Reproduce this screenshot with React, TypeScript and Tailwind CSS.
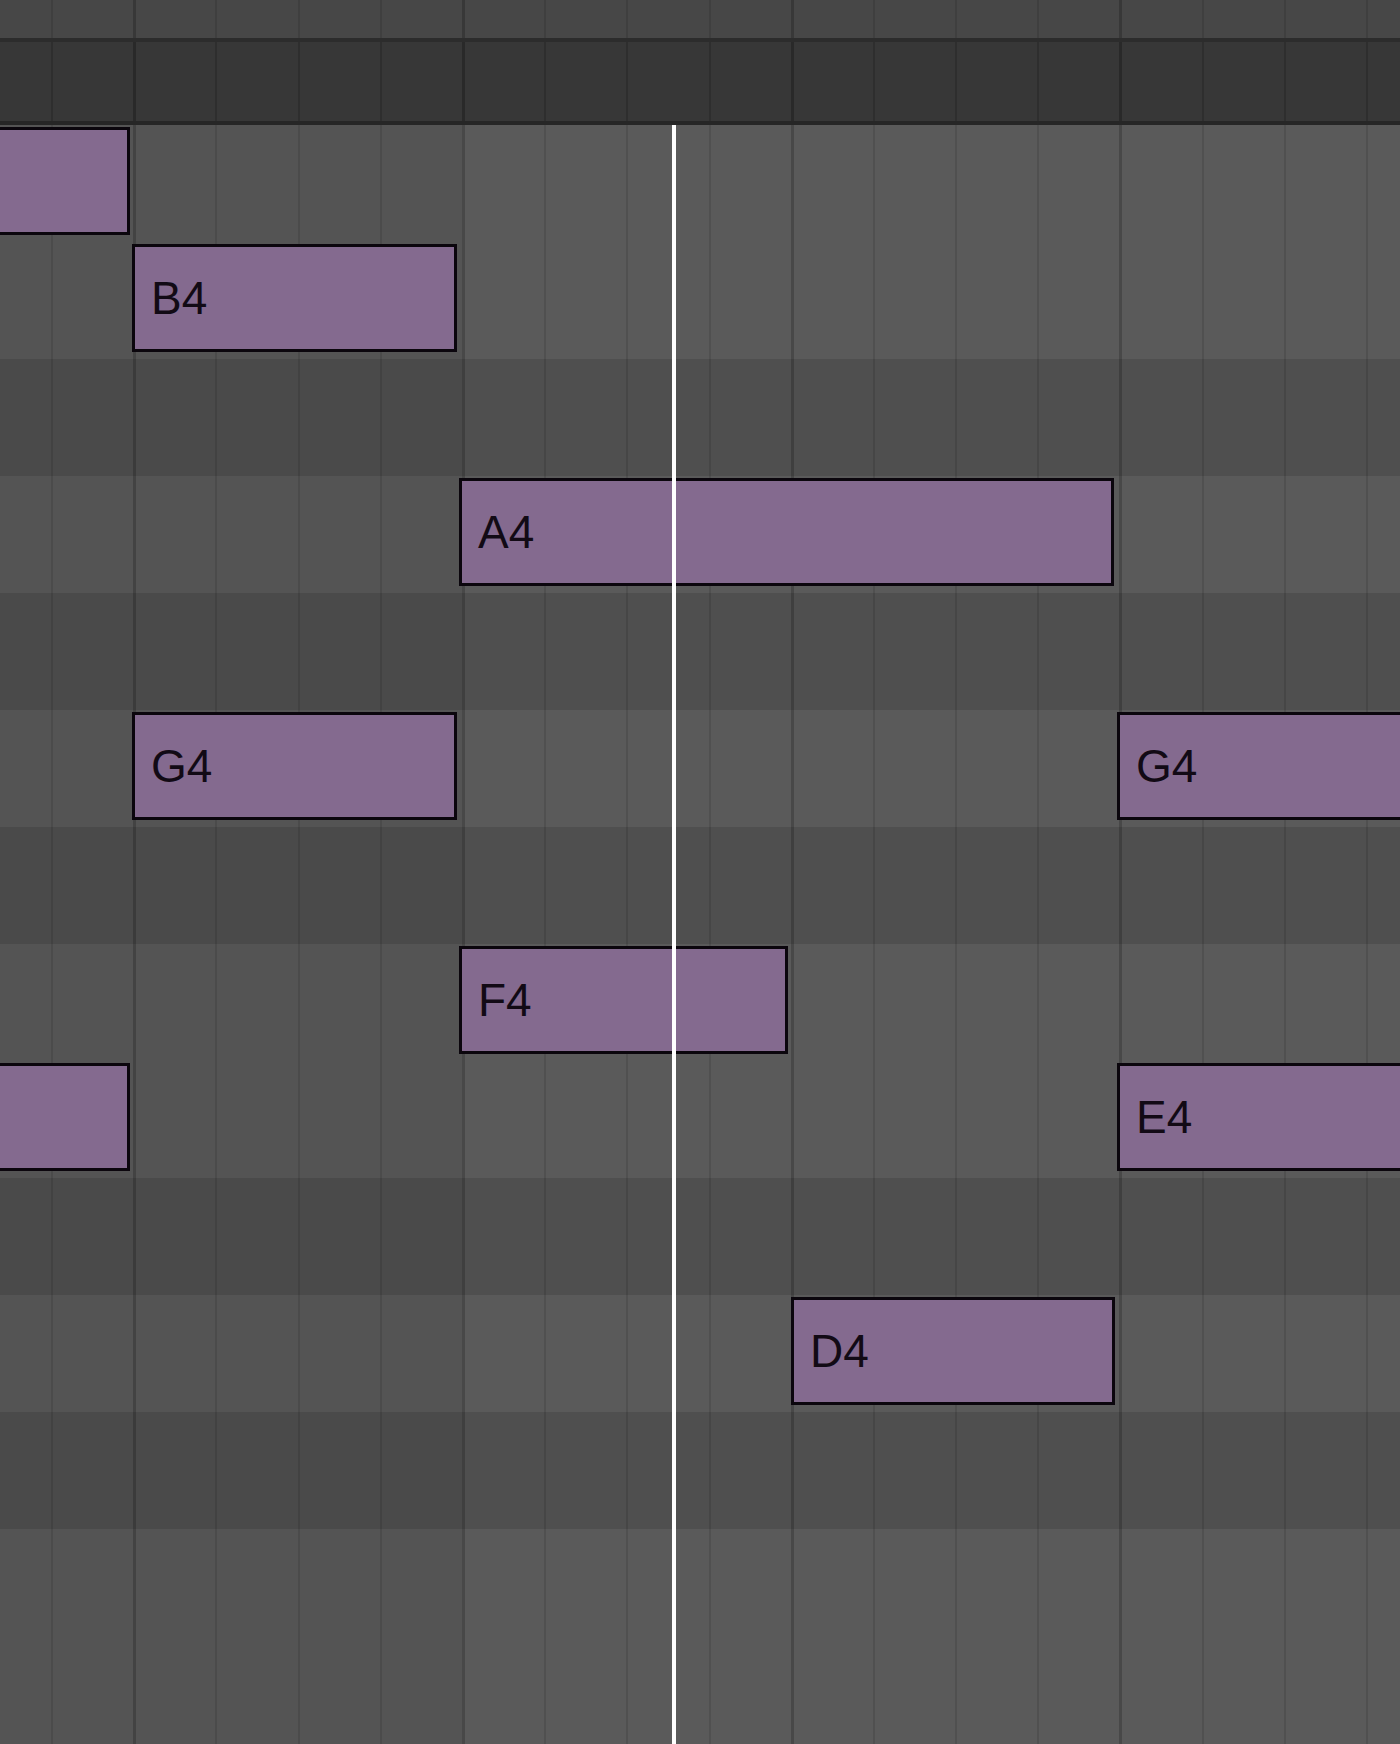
const ROW_H = 117;

// top to bottom, true = black key row
const ROWS: [string, boolean][] = [
  ["C5", false],
  ["B4", false],
  ["A#4", true],
  ["A4", false],
  ["G#4", true],
  ["G4", false],
  ["F#4", true],
  ["F4", false],
  ["E4", false],
  ["D#4", true],
  ["D4", false],
  ["C#4", true],
  ["C4", false],
  ["B3", false],
];

// left-hand notes start off screen, so their labels aren't visible
const NOTES = [
  { label: "", row: 0, left: -260, right: 130 },
  { label: "B4", row: 1, left: 132, right: 457 },
  { label: "A4", row: 3, left: 459, right: 1114 },
  { label: "G4", row: 5, left: 132, right: 457 },
  { label: "G4", row: 5, left: 1117, right: 1480 },
  { label: "F4", row: 7, left: 459, right: 788 },
  { label: "", row: 8, left: -260, right: 130 },
  { label: "E4", row: 8, left: 1117, right: 1480 },
  { label: "D4", row: 10, left: 791, right: 1115 },
];

const cols = Array.from({ length: 18 }, (_, i) => i);

function lineClass(i: number, beat: string, bar: string) {
  if (i === 0) return "";
  return (i - 1) % 4 === 1 ? bar : beat;
}

function cellBg(black: boolean, i: number) {
  const early = i <= 5;
  if (black) return early ? "bg-[#4a4a4a]" : "bg-[#4f4f4f]";
  return early ? "bg-[#545454]" : "bg-[#5a5a5a]";
}

function HeaderStrip({ className, beat, bar }: { className: string; beat: string; bar: string }) {
  return (
    <div className={`grid grid-cols-[51px_repeat(17,82.2px)] ${className}`}>
      {cols.map((i) => (
        <div key={i} className={lineClass(i, beat, bar)} />
      ))}
    </div>
  );
}

function Note({ label, row, left, right }: (typeof NOTES)[number]) {
  return (
    <div
      className="absolute flex items-center border-[3px] border-[#0b060d] bg-[#846a8f] pl-[16px] text-[46px] leading-none text-[#120a15]"
      style={{ left, top: row * ROW_H + 2, width: right - left, height: 108 }}
    >
      {label}
    </div>
  );
}

export default function App() {
  return (
    <div className="flex h-[1744px] w-[1400px] flex-col overflow-hidden bg-[#545454] font-['Liberation_Sans',Arial,sans-serif]">
      <HeaderStrip
        className="h-[42px] shrink-0 border-b-4 border-[#2c2c2c] bg-[#474747]"
        beat="border-l-2 border-black/10"
        bar="border-l-[3px] border-black/20"
      />
      <HeaderStrip
        className="h-[83px] shrink-0 border-b-4 border-[#262626] bg-[#373737]"
        beat="border-l-2 border-black/15"
        bar="border-l-[3px] border-black/25"
      />

      <div className="relative flex-1 overflow-hidden">
        <div className="flex flex-col">
          {ROWS.map(([name, black]) => (
            <div key={name} className="grid h-[117px] shrink-0 grid-cols-[51px_repeat(17,82.2px)]">
              {cols.map((i) => (
                <div
                  key={i}
                  className={`${cellBg(black, i)} ${lineClass(
                    i,
                    "border-l-2 border-black/10",
                    "border-l-[3px] border-black/20"
                  )}`}
                />
              ))}
            </div>
          ))}
        </div>

        {NOTES.map((n, i) => (
          <Note key={i} {...n} />
        ))}

        <div className="absolute top-0 bottom-0 left-[672px] w-[4px] bg-white" />
      </div>
    </div>
  );
}
